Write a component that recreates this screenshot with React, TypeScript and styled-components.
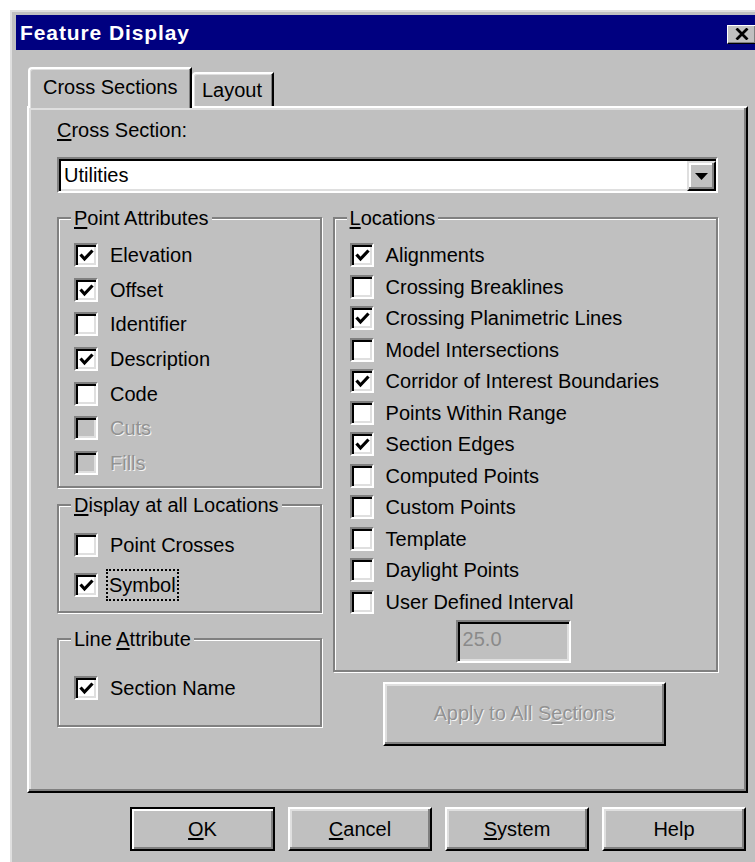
import React from 'react';
import styled, { createGlobalStyle, css } from 'styled-components';

const face = '#c0c0c0';
const shade = '#808080';
const light = '#dfdfdf';

const GlobalStyle = createGlobalStyle`
  html, body {
    margin: 0;
    padding: 0;
    background: #fff;
    overflow: hidden;
  }
  body {
    font-family: 'Liberation Sans', Arial, sans-serif;
    font-size: 20px;
    color: #000;
  }
`;

/* classic 3D bevels */
const raised = css`
  border: 2px solid;
  border-color: #fff #000 #000 #fff;
  box-shadow: inset -2px -2px 0 ${shade}, inset 2px 2px 0 ${light};
`;

const sunken = css`
  border: 2px solid;
  border-color: ${shade} #fff #fff ${shade};
  box-shadow: inset 2px 2px 0 #000, inset -2px -2px 0 ${light};
`;

const disabledText = css`
  color: #929292;
  text-shadow: 1px 1px 0 #f4f4f4;
`;

const Window = styled.div`
  box-sizing: border-box;
  margin: 10px 0 0 10px;
  width: 752px;
  height: 860px;
  background: ${face};
  border-top: 2px solid ${light};
  border-left: 2px solid ${light};
  padding: 3px 4px;
`;

const TitleBar = styled.div`
  height: 35px;
  background: #000080;
  display: flex;
  align-items: center;
  justify-content: space-between;
  padding: 0 2px 0 4px;
  color: #fff;
  font-weight: bold;
  font-size: 21px;
  letter-spacing: 0.9px;
`;

const CloseButton = styled.div`
  box-sizing: border-box;
  width: 29px;
  height: 19px;
  margin-top: 3px;
  background: ${face};
  border: 1px solid;
  border-color: #fff #000 #000 #fff;
  box-shadow: inset -1px -1px 0 ${shade};
  display: flex;
  align-items: center;
  justify-content: center;
`;

const Body = styled.div`
  padding: 17px 0 0 11px;
`;

const TabRow = styled.div`
  display: flex;
  align-items: flex-end;
  padding-left: 1px;
  margin-bottom: -2px;
  position: relative;
  z-index: 1;
`;

const Tab = styled.div<{ $active?: boolean; $width: number }>`
  box-sizing: border-box;
  width: ${(p) => p.$width}px;
  height: ${(p) => (p.$active ? 41 : 34)}px;
  margin-bottom: ${(p) => (p.$active ? 0 : 2)}px;
  padding: ${(p) => (p.$active ? '6px 0 0 13px' : '4px 0 0 8px')};
  line-height: 24px;
  background: ${face};
  border-top: 2px solid #fff;
  border-left: 2px solid #fff;
  border-right: 2px solid #000;
  border-top-left-radius: 4px;
  box-shadow: inset -1px 0 0 ${shade}, inset 1px 1px 0 ${light};
`;

const Panel = styled.div`
  box-sizing: border-box;
  width: 721px;
  height: 687px;
  border: 2px solid;
  border-color: #fff #000 #000 #fff;
  box-shadow: inset -2px -2px 0 ${shade}, inset 2px 2px 0 ${light};
  padding: 10px 28px 0 28px;
`;

const FieldLabel = styled.div`
  line-height: 24px;
`;

const Key = styled.span`
  text-decoration: underline;
  text-underline-offset: 2px;
  text-decoration-thickness: 2px;
`;

const Combo = styled.div`
  box-sizing: border-box;
  margin-top: 15px;
  height: 36px;
  background: #fff;
  ${sunken};
  display: flex;
  align-items: center;
  padding-left: 5px;
`;

const ComboText = styled.span`
  flex: 1;
`;

const DropButton = styled.div`
  box-sizing: border-box;
  align-self: stretch;
  margin-top: 2px;
  width: 29px;
  background: ${face};
  border: 2px solid;
  border-color: ${light} #000 #000 ${light};
  box-shadow: inset -2px -2px 0 ${shade}, inset 2px 2px 0 #fff;
  display: flex;
  align-items: center;
  justify-content: center;
`;

const Columns = styled.div`
  display: flex;
  gap: 11px;
  margin-top: 24px;
`;

const Column = styled.div<{ $width: number }>`
  width: ${(p) => p.$width}px;
  display: flex;
  flex-direction: column;
`;

const Group = styled.div<{ $mt?: number; $pt: number; $pb: number }>`
  box-sizing: border-box;
  margin-top: ${(p) => p.$mt ?? 0}px;
  border: 2px solid ${shade};
  box-shadow: inset 1px 1px 0 #fff, 1px 1px 0 #fff;
  padding: 0 15px ${(p) => p.$pb}px;
  & > div:nth-child(2) {
    padding-top: ${(p) => p.$pt}px;
  }
`;

const Legend = styled.div`
  display: table;
  margin: -13px 0 0 -3px;
  padding: 0 3px;
  background: ${face};
  line-height: 24px;
`;

const Rows = styled.div``;

const Row = styled.div<{ $h: number }>`
  height: ${(p) => p.$h}px;
  display: flex;
  align-items: center;
  gap: 12px;
`;

const Box = styled.div<{ $disabled?: boolean }>`
  box-sizing: border-box;
  flex: none;
  width: 24px;
  height: 24px;
  background: ${(p) => (p.$disabled ? face : '#fff')};
  ${sunken};
  display: flex;
  align-items: center;
  justify-content: center;
  padding: 1px 0 0 1px;
`;

const RowLabel = styled.span<{ $disabled?: boolean; $focused?: boolean }>`
  line-height: 24px;
  ${(p) => p.$disabled && disabledText};
  ${(p) =>
    p.$focused &&
    css`
      border: 2px dotted #000;
      padding: 2px 1px 2px 1px;
      margin-left: -4px;
    `};
`;

const IntervalField = styled.div`
  box-sizing: border-box;
  margin: 2px 0 0 106px;
  width: 115px;
  height: 43px;
  background: ${face};
  ${sunken};
  color: #8a8a8a;
  display: flex;
  align-items: center;
  padding: 0 0 3px 5px;
`;

const ApplyButton = styled.div`
  box-sizing: border-box;
  margin: 10px 0 0 50px;
  width: 283px;
  height: 64px;
  background: ${face};
  ${raised};
  display: flex;
  align-items: center;
  justify-content: center;
  ${disabledText};
`;

const Footer = styled.div`
  width: 721px;
  box-sizing: border-box;
  display: flex;
  justify-content: flex-end;
  gap: 13px;
  padding-right: 2px;
  margin-top: 14px;
`;

const Button = styled.div<{ $default?: boolean }>`
  box-sizing: border-box;
  width: 144px;
  height: 44px;
  background: ${face};
  display: flex;
  align-items: center;
  justify-content: center;
  ${raised};
  ${(p) =>
    p.$default &&
    css`
      width: 145px;
      border-color: #000;
      box-shadow: inset 2px 2px 0 #fff, inset -2px -2px 0 ${shade};
    `};
`;

const Check = () => (
  <svg width="15" height="13" viewBox="0 0 15 13">
    <polyline points="1.5,5.5 5.5,10 13.5,1.5" fill="none" stroke="#000" strokeWidth="3.2" />
  </svg>
);

type Item = { label: React.ReactNode; checked?: boolean; disabled?: boolean; focused?: boolean };

const CheckRow = ({ item, h }: { item: Item; h: number }) => (
  <Row $h={h}>
    <Box $disabled={item.disabled}>{item.checked && <Check />}</Box>
    <RowLabel $disabled={item.disabled} $focused={item.focused}>
      {item.label}
    </RowLabel>
  </Row>
);

const pointAttributes: Item[] = [
  { label: 'Elevation', checked: true },
  { label: 'Offset', checked: true },
  { label: 'Identifier' },
  { label: 'Description', checked: true },
  { label: 'Code' },
  { label: 'Cuts', disabled: true },
  { label: 'Fills', disabled: true },
];

const allLocations: Item[] = [
  { label: 'Point Crosses' },
  { label: 'Symbol', checked: true, focused: true },
];

const locations: Item[] = [
  { label: 'Alignments', checked: true },
  { label: 'Crossing Breaklines' },
  { label: 'Crossing Planimetric Lines', checked: true },
  { label: 'Model Intersections' },
  { label: 'Corridor of Interest Boundaries', checked: true },
  { label: 'Points Within Range' },
  { label: 'Section Edges', checked: true },
  { label: 'Computed Points' },
  { label: 'Custom Points' },
  { label: 'Template' },
  { label: 'Daylight Points' },
  { label: 'User Defined Interval' },
];

export default function App() {
  return (
    <>
      <GlobalStyle />
      <Window>
        <TitleBar>
          <span>Feature Display</span>
          <CloseButton>
            <svg width="14" height="12" viewBox="0 0 14 12">
              <path d="M1.5 0.5 L12.5 11.5 M12.5 0.5 L1.5 11.5" stroke="#000" strokeWidth="2.8" />
            </svg>
          </CloseButton>
        </TitleBar>
        <Body>
          <TabRow>
            <Tab $active $width={164}>Cross Sections</Tab>
            <Tab $width={82}>Layout</Tab>
          </TabRow>
          <Panel>
            <FieldLabel>
              <Key>C</Key>ross Section:
            </FieldLabel>
            <Combo>
              <ComboText>Utilities</ComboText>
              <DropButton>
                <svg width="13" height="7" viewBox="0 0 13 7">
                  <path d="M0 0 H13 L6.5 7 Z" fill="#000" />
                </svg>
              </DropButton>
            </Combo>
            <Columns>
              <Column $width={265}>
                <Group $pt={7.7} $pb={5.6}>
                  <Legend>
                    <Key>P</Key>oint Attributes
                  </Legend>
                  <Rows>
                    {pointAttributes.map((it, i) => (
                      <CheckRow key={i} item={it} h={34.67} />
                    ))}
                  </Rows>
                </Group>
                <Group $mt={16} $pt={8} $pb={6}>
                  <Legend>
                    <Key>D</Key>isplay at all Locations
                  </Legend>
                  <Rows>
                    {allLocations.map((it, i) => (
                      <CheckRow key={i} item={it} h={40} />
                    ))}
                  </Rows>
                </Group>
                <Group $mt={25} $pt={19.5} $pb={19.5}>
                  <Legend>
                    Line <Key>A</Key>ttribute
                  </Legend>
                  <Rows>
                    <CheckRow item={{ label: 'Section Name', checked: true }} h={35} />
                  </Rows>
                </Group>
              </Column>
              <Column $width={386}>
                <Group $pt={9.2} $pb={7}>
                  <Legend>
                    <Key>L</Key>ocations
                  </Legend>
                  <Rows>
                    {locations.map((it, i) => (
                      <CheckRow key={i} item={it} h={31.55} />
                    ))}
                    <IntervalField>25.0</IntervalField>
                  </Rows>
                </Group>
                <ApplyButton>
                  Apply to All S<Key>e</Key>ctions
                </ApplyButton>
              </Column>
            </Columns>
          </Panel>
          <Footer>
            <Button $default>
              <span>
                <Key>O</Key>K
              </span>
            </Button>
            <Button>
              <span>
                <Key>C</Key>ancel
              </span>
            </Button>
            <Button>
              <span>
                <Key>S</Key>ystem
              </span>
            </Button>
            <Button>Help</Button>
          </Footer>
        </Body>
      </Window>
    </>
  );
}
